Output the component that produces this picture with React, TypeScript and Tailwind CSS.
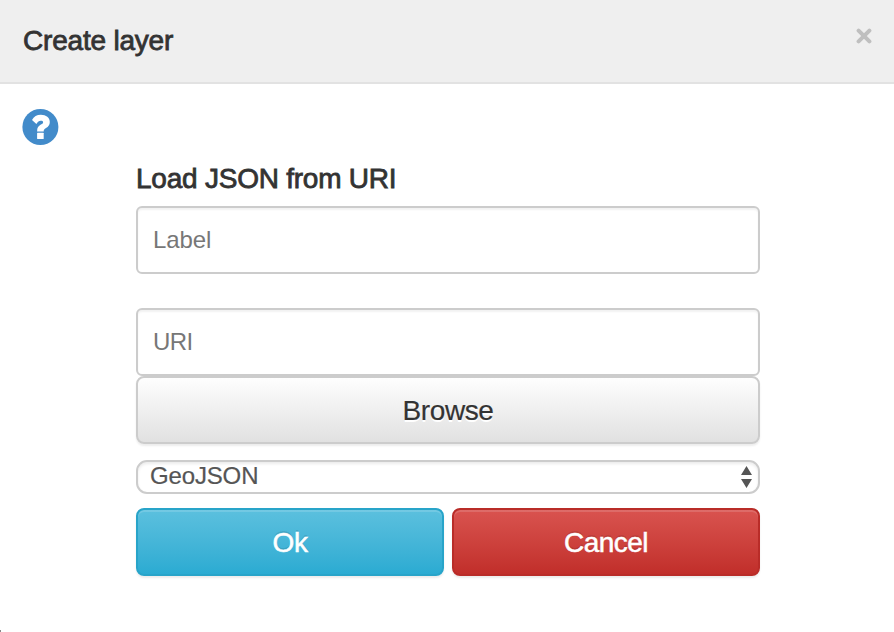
import React from "react";

const buttonBase =
  "flex h-[68px] items-center justify-center rounded-[8px] border-2 pt-[2px] text-[28px] leading-10";

function HelpIcon() {
  return (
    <svg width="37" height="36" viewBox="-0.4 0 37 36" className="block" aria-label="Help">
      <circle cx="18" cy="18" r="18" fill="#428bca" />
      <path
        d="M9.6 10.9C11.4 7.5 14.4 5.7 18.5 5.7C23.7 5.7 27.4 8.7 27.4 13C27.4 15.9 26 17.7 23.6 19.1C21.9 20.1 21.3 20.8 21.3 22.4H14.7C14.7 18.7 16 17 18.5 15.6C20.2 14.7 20.7 14.2 20.7 13.2C20.7 12.2 19.7 11.8 18.3 11.8C16.5 11.8 15.5 12.7 14 14.9Z"
        fill="#fff"
      />
      <rect x="14.7" y="23.8" width="6.6" height="6.3" rx="0.5" fill="#fff" />
    </svg>
  );
}

export default function App() {
  return (
    <div className="relative h-[632px] w-[894px] overflow-hidden bg-white font-['Liberation_Sans',Arial,sans-serif] text-[#333]">
      <header className="flex h-[84px] items-start justify-between border-b-2 border-[#e2e2e2] bg-[#efefef] pr-[22px] pl-[23px]">
        <h1 className="pt-[21px] text-[28px] leading-10 tracking-[-0.2px] [-webkit-text-stroke:0.8px_#333]">
          Create layer
        </h1>
        <button aria-label="Close" className="pt-[28px]">
          <svg width="16" height="16" viewBox="0 0 16 16" className="block">
            <path d="M2.6 2.6L13.4 13.4M13.4 2.6L2.6 13.4" stroke="#bfbfbf" strokeWidth="4" strokeLinecap="round" />
          </svg>
        </button>
      </header>

      <div className="pt-[25px] pl-[22px]">
        <HelpIcon />
      </div>

      <form className="ml-[136px] flex w-[624px] flex-col pt-[14px]" onSubmit={(e) => e.preventDefault()}>
        <label className="h-[47px] text-[28px] leading-10 tracking-[-0.23px] [-webkit-text-stroke:0.8px_#333]">
          Load JSON from URI
        </label>
        <input
          placeholder="Label"
          className="mb-[34px] h-[68px] rounded-[6px] border-2 border-[#ccc] bg-white px-[15px] text-[24px] tracking-[-0.1px] shadow-[inset_0_2px_2px_rgba(0,0,0,0.055)] placeholder:text-[#777]"
        />
        <input
          placeholder="URI"
          className="h-[68px] rounded-[6px] border-2 border-[#ccc] bg-white px-[15px] text-[24px] tracking-[-0.6px] shadow-[inset_0_2px_2px_rgba(0,0,0,0.055)] placeholder:text-[#777]"
        />
        <button
          className={`${buttonBase} mb-4 border-[#ccc] bg-linear-to-b from-white to-[#e0e0e0] bg-origin-border tracking-[-0.4px] text-[#333] shadow-[inset_0_2px_0_rgba(255,255,255,0.15),0_2px_2px_rgba(0,0,0,0.075)] [-webkit-text-stroke:0.2px_#333] [text-shadow:0_2px_0_#fff]`}
        >
          Browse
        </button>
        <div className="mb-[14px] flex h-[34px] items-start justify-between rounded-[11px] border-2 border-[#ccc] bg-white pr-[6px] pl-3 text-[#555] shadow-[inset_0_2px_3px_rgba(0,0,0,0.08)]">
          <span className="text-[24px] leading-7 tracking-[-0.15px] [-webkit-text-stroke:0.2px_#555]">GeoJSON</span>
          <svg width="11" height="22" viewBox="0 0 11 22" className="mt-1 block">
            <path d="M0 9L5.5 0L11 9ZM0 13H11L5.5 22Z" fill="#555" />
          </svg>
        </div>
        <div className="grid grid-cols-2 gap-2 text-white">
          <button
            className={`${buttonBase} border-[#28a4c9] bg-linear-to-b from-[#5bc0de] to-[#2aabd2] tracking-[-0.3px] shadow-[inset_0_2px_0_rgba(255,255,255,0.15),0_2px_2px_rgba(0,0,0,0.075)] [-webkit-text-stroke:0.5px_#fff] [text-shadow:0_-2px_0_rgba(0,0,0,0.1)]`}
          >
            Ok
          </button>
          <button
            className={`${buttonBase} border-[#b92c28] bg-linear-to-b from-[#d9534f] to-[#c12e2a] tracking-[-0.5px] shadow-[inset_0_2px_0_rgba(255,255,255,0.15),0_2px_2px_rgba(0,0,0,0.075)] [-webkit-text-stroke:0.5px_#fff] [text-shadow:0_-2px_0_rgba(0,0,0,0.1)]`}
          >
            Cancel
          </button>
        </div>
      </form>
      <div className="absolute bottom-0 left-0 h-[2px] w-px bg-[#888]" />
    </div>
  );
}
